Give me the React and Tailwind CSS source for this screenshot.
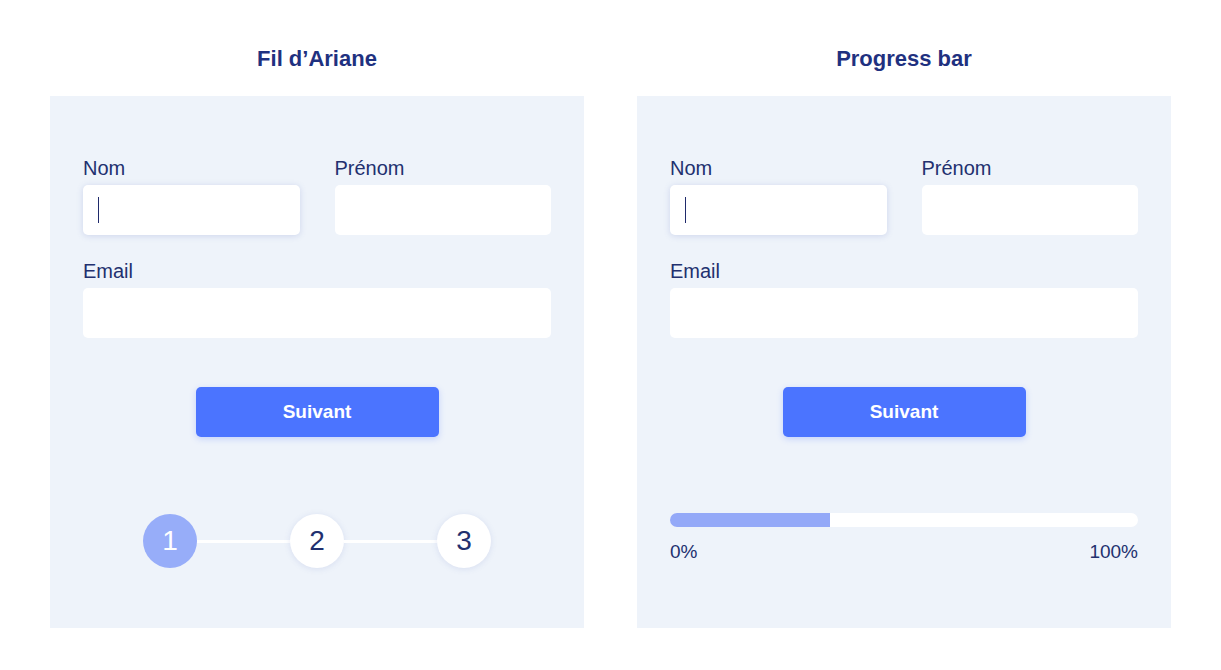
import React from "react";

const navy = "text-[#22306f]";

const Field = ({ label, focused, className = "" }) => (
  <div className={`flex flex-col ${className}`}>
    <label className={`h-[22px] text-[20px] leading-[22px] ${navy}`}>{label}</label>
    <div
      className={`mt-[6px] h-[50px] w-full rounded-[5px] bg-white flex items-center pl-[15px] ${
        focused ? "shadow-[0_1px_6px_rgba(90,110,190,0.22)]" : ""
      }`}
    >
      {focused && <span className="block h-[26px] w-px bg-[#1f2a6b]" />}
    </div>
  </div>
);

const Form = () => (
  <div>
    <div className="flex gap-[35px]">
      <Field label="Nom" focused className="flex-1" />
      <Field label="Prénom" className="flex-1" />
    </div>
    <Field label="Email" className="mt-[25px]" />
    <div className="mt-[49px] flex justify-center">
      <button className="h-[50px] w-[243px] rounded-[5px] bg-[#4b74ff] text-[19px] font-bold text-white shadow-[0_2px_6px_rgba(75,116,255,0.25)]">
        Suivant
      </button>
    </div>
  </div>
);

const Step = ({ n, active }) => (
  <div
    className={`flex h-[54px] w-[54px] shrink-0 items-center justify-center rounded-full text-[28px] ${
      active ? "bg-[#97adf9] text-white" : `bg-white ${navy} shadow-[0_1px_6px_rgba(90,110,190,0.15)]`
    }`}
  >
    {n}
  </div>
);

const Panel = ({ title, children }) => (
  <div className="w-[534px]">
    <h2 className="h-[52px] text-center text-[22px] font-bold leading-[52px] text-[#1f3180]">{title}</h2>
    <div className="mt-[11px] h-[532px] bg-[#eef3fa] px-[33px] pt-[61px]">{children}</div>
  </div>
);

export default function App() {
  return (
    <div
      className="flex h-[670px] w-[1221px] gap-[53px] bg-white pl-[50px] pt-[33px]"
      style={{ fontFamily: '"Liberation Sans", Arial, sans-serif' }}
    >
      <Panel title="Fil d’Ariane">
        <Form />
        <div className="mt-[77px] flex items-center justify-center">
          <Step n="1" active />
          <div className="h-[3px] w-[93px] bg-white" />
          <Step n="2" />
          <div className="h-[3px] w-[93px] bg-white" />
          <Step n="3" />
        </div>
      </Panel>
      <Panel title="Progress bar">
        <Form />
        <div className="mt-[76px] h-[14px] w-full overflow-hidden rounded-full bg-white">
          <div className="h-full w-[160px] bg-[#94a9f8]" />
        </div>
        <div className={`mt-[14px] flex justify-between text-[19px] leading-[22px] ${navy}`}>
          <span>0%</span>
          <span>100%</span>
        </div>
      </Panel>
    </div>
  );
}
